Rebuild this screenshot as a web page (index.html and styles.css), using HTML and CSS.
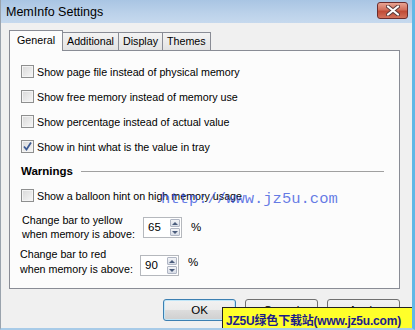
FILE: index.html
```html
<!DOCTYPE html>
<html lang="en">
<head>
    <meta charset="UTF-8">
    <title>MemInfo Settings</title>
    <link rel="stylesheet" href="styles.css">
</head>
<body>
    <div class="window">
        <div class="titlebar">
            <span class="title">MemInfo Settings</span>
            <div class="close-btn">
                <svg width="14" height="11" viewBox="0 0 14 11">
                    <path d="M2 1.5 L12 9.5 M12 1.5 L2 9.5" stroke="#5a3a3a" stroke-width="4" stroke-linecap="round"/>
                    <path d="M2 1.5 L12 9.5 M12 1.5 L2 9.5" stroke="#ffffff" stroke-width="2.2" stroke-linecap="round"/>
                </svg>
            </div>
        </div>

        <div class="content">
            <div class="tabs">
                <div class="tab active">General</div>
                <div class="tab">Additional</div>
                <div class="tab">Display</div>
                <div class="tab">Themes</div>
            </div>

            <div class="panel">
                <div class="check-row"><span class="checkbox"></span>Show page file instead of physical memory</div>
                <div class="check-row"><span class="checkbox"></span>Show free memory instead of memory use</div>
                <div class="check-row"><span class="checkbox"></span>Show percentage instead of actual value</div>
                <div class="check-row">
                    <span class="checkbox checked">
                        <svg width="11" height="11" viewBox="0 0 11 11">
                            <path d="M2 5.5 L4.5 8.5 L9 1.5" fill="none" stroke="#3c5a93" stroke-width="1.8"/>
                        </svg>
                    </span>Show in hint what is the value in tray
                </div>

                <div class="group-title">Warnings<span class="rule"></span></div>

                <div class="check-row"><span class="checkbox"></span>Show a balloon hint on high memory usage</div>

                <div class="spin-row">
                    <div class="spin-label">Change bar to yellow<br>when memory is above:</div>
                    <div class="spin">
                        <span class="spin-value">65</span>
                        <span class="spin-btns"><span class="spin-up"></span><span class="spin-down"></span></span>
                    </div>
                    <span class="pct">%</span>
                </div>

                <div class="spin-row red">
                    <div class="spin-label">Change bar to red<br>when memory is above:</div>
                    <div class="spin">
                        <span class="spin-value">90</span>
                        <span class="spin-btns"><span class="spin-up"></span><span class="spin-down"></span></span>
                    </div>
                    <span class="pct">%</span>
                </div>
            </div>

            <div class="buttons">
                <button class="btn default">OK</button>
                <button class="btn">Cancel</button>
                <button class="btn">Apply</button>
            </div>
        </div>

        <!-- watermarks baked into the screenshot -->
        <div class="wm-url">http://www.jz5u.com</div>
        <div class="wm-badge">JZ5U绿色下载站(www.jz5u.com)</div>
    </div>
</body>
</html>
```

FILE: styles.css
```css
body {
    margin: 0;
    padding: 0;
    font-family: "Liberation Sans", Arial, sans-serif;
    font-size: 10.7px;
    color: #000;
    background: #f0f0f0;
}

.window {
    position: relative;
    width: 415px;
    height: 330px;
    box-sizing: border-box;
    background: #f0f0f0;
    border-left: 1px solid #9aa3ad;
    border-right: 3px solid #62b8e6;
    border-bottom: 2px solid #a8cbe8;
    overflow: hidden;
}

.titlebar {
    height: 23px;
    display: flex;
    align-items: center;
    justify-content: space-between;
    padding: 0 4px 0 5px;
    background: linear-gradient(#a9c5e3, #bcd2ea 60%, #c6d9ee);
}

.title {
    font-size: 12.5px;
    color: #000;
    margin-top: 1px;
}

.close-btn {
    width: 29px;
    height: 15px;
    margin-top: -2px;
    border: 1px solid #6b2c2c;
    border-radius: 3px;
    background: linear-gradient(#e8a493, #d1705c 45%, #c04a35 55%, #d3725c);
    display: flex;
    align-items: center;
    justify-content: center;
}

.content {
    padding: 7px 0 0 8px;
}

.tabs {
    display: flex;
    height: 20px;
    align-items: flex-end;
}

.tab {
    height: 18px;
    box-sizing: border-box;
    padding: 0 4px;
    border: 1px solid #898c95;
    border-bottom: none;
    margin-right: -1px;
    background: linear-gradient(#f3f3f3, #e3e3e3);
    line-height: 17px;
}

.tab.active {
    height: 21px;
    margin-bottom: -1px;
    padding: 0 7px;
    background: #fcfcfc;
    position: relative;
    z-index: 1;
    line-height: 18px;
}

.panel {
    width: 391px;
    height: 239px;
    box-sizing: border-box;
    border: 1px solid #898c95;
    background: #fcfcfc;
    padding: 8px 0 0 11px;
}

.check-row {
    height: 25px;
    display: flex;
    align-items: center;
}

.checkbox {
    width: 13px;
    height: 13px;
    box-sizing: border-box;
    border: 1px solid #8e8f8f;
    background: linear-gradient(135deg, #d8d8d8, #f7f7f7);
    box-shadow: inset 0 0 0 1px #f4f4f4;
    margin-right: 3px;
    display: flex;
    align-items: center;
    justify-content: center;
}

.group-title {
    height: 24px;
    display: flex;
    align-items: center;
    font-weight: bold;
    font-size: 11.5px;
}

.rule {
    flex: 1;
    height: 1px;
    background: #a0a0a0;
    margin: 1px 15px 0 8px;
}

.spin-row {
    display: flex;
    align-items: center;
    margin-top: 5px;
    line-height: 14px;
}

.spin-row.red {
    margin-top: 6px;
    line-height: 15px;
}

.spin-label {
    width: 121px;
    padding-left: 1px;
}

.spin-row.red .spin-label {
    padding-left: 0;
    margin-left: -1px;
    width: 120px;
}

.spin-row.red .spin {
    margin-top: 7px;
}

.spin {
    width: 39px;
    height: 21px;
    box-sizing: border-box;
    border: 1px solid #b5b8bd;
    background: #fff;
    display: flex;
    align-items: center;
    justify-content: space-between;
    padding: 0 1px 0 4px;
    font-size: 11.5px;
}

.spin-btns {
    width: 10px;
    height: 17px;
    display: flex;
    flex-direction: column;
    gap: 1px;
}

.spin-up, .spin-down {
    flex: 1;
    border: 1px solid #b0b6c4;
    border-radius: 1px;
    background: linear-gradient(#f3f4f7, #d8dde7);
    position: relative;
}

.spin-up::after, .spin-down::after {
    content: "";
    position: absolute;
    left: 1px;
    top: 2px;
    border-left: 3px solid transparent;
    border-right: 3px solid transparent;
}

.spin-up::after {
    border-bottom: 3px solid #4a5c7c;
}

.spin-down::after {
    border-top: 3px solid #4a5c7c;
}

.pct {
    margin-left: 9px;
    font-size: 11.5px;
}

.buttons {
    width: 391px;
    display: flex;
    justify-content: flex-end;
    gap: 9px;
    margin-top: 10px;
}

.btn {
    width: 73px;
    height: 22px;
    border: 1px solid #707070;
    border-radius: 3px;
    background: linear-gradient(#f2f2f2, #ebebeb 50%, #dddddd 51%, #cfcfcf);
    font-family: "Liberation Sans", Arial, sans-serif;
    font-size: 11.5px;
    color: #000;
    padding: 0;
}

.btn.default {
    border-color: #3c7fb1;
    box-shadow: inset 0 0 0 1px #c0e6f8;
}

.wm-url {
    position: absolute;
    left: 160px;
    top: 190px;
    font-family: "Liberation Mono", monospace;
    font-size: 15.5px;
    color: rgba(50, 80, 220, 0.75);
}

.wm-badge {
    position: absolute;
    left: 221px;
    top: 307px;
    width: 200px;
    height: 26px;
    box-sizing: border-box;
    border: 1px solid #222;
    background: #ffff2a;
    padding: 3px 0 0 3px;
    font-family: "Liberation Sans", "Noto Sans CJK SC", sans-serif;
    font-weight: bold;
    font-size: 12px;
    letter-spacing: -0.2px;
    color: #1c1c8a;
    white-space: nowrap;
}
```
